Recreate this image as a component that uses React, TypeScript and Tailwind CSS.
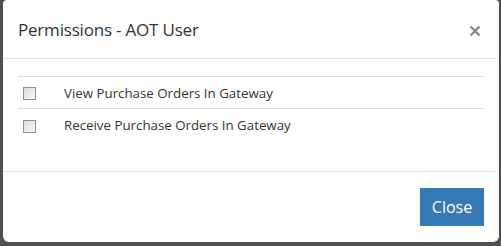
import React from 'react';

const permissions = ['View Purchase Orders In Gateway', 'Receive Purchase Orders In Gateway'];

const Checkbox = () => (
    <span className="block h-[13px] w-[13px] border border-[#8f8f8f] bg-gradient-to-br from-[#dcdcdc] to-[#f7f7f7]" />
);

const App = () => {
    return (
        <div className="h-[246px] w-[501px] overflow-hidden bg-[#4f4f4f] pl-[3px] pr-[2px] pb-[4px]" style={{fontFamily: '"Open Sans", "Liberation Sans", sans-serif'}}>
            <div className="flex h-[242px] flex-col rounded-b-[6px] rounded-t-[4px] bg-white text-[#333]">
                <div className="flex h-[59px] items-center justify-between border-b border-[#e5e5e5] pl-[15px] pr-[18px]">
                    <h4 className="pt-[2px] text-[17px] tracking-[-0.2px]">Permissions - AOT User</h4>
                    <svg width="12" height="12" viewBox="0 0 12 12" className="mt-[3px]">
                        <path d="M1.5 1.5 L10.5 10.5 M10.5 1.5 L1.5 10.5" stroke="#8a8a8a" strokeWidth="2.4" />
                    </svg>
                </div>
                <div className="h-[112px] px-[15px] pt-[17px]">
                    <div className="border-t border-[#ddd]">
                        {permissions.map((p, i) => (
                            <div key={p} className={`flex h-[32px] items-center pt-[2px] ${i === 0 ? 'border-b border-[#ddd]' : ''}`}>
                                <div className="w-[46px] pl-[5px]">
                                    <Checkbox />
                                </div>
                                <span className="text-[13.3px]">{p}</span>
                            </div>
                        ))}
                    </div>
                </div>
                <div className="flex flex-1 items-start justify-end border-t border-[#e5e5e5] pr-[15px] pt-[16px]">
                    <button className="h-[38px] w-[64px] bg-[#337ab7] text-[16px] text-white">Close</button>
                </div>
            </div>
        </div>
    );
};

export default App;
